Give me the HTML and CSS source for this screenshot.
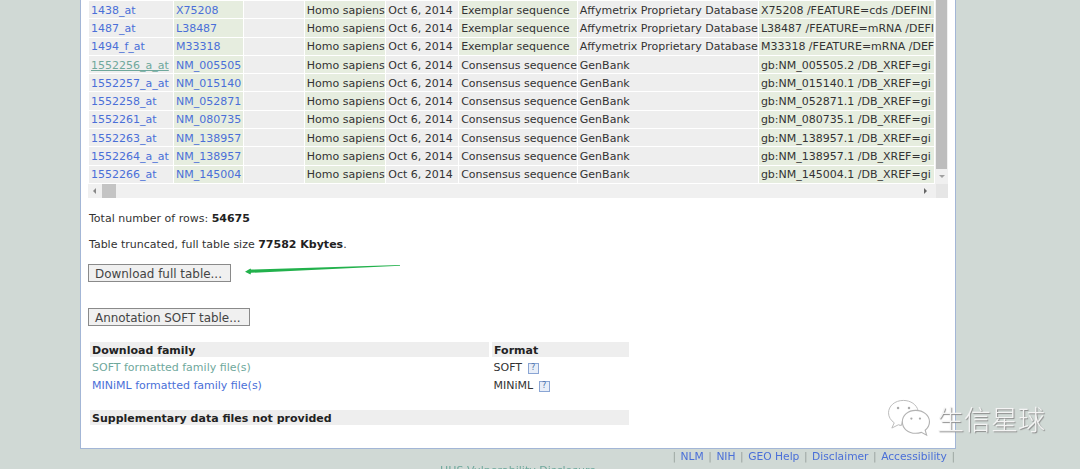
FILE: index.html
```html
<!DOCTYPE html>
<html lang="en">
<head>
<meta charset="utf-8">
<title>GEO Platform</title>
<link rel="stylesheet" href="styles.css">
</head>
<body>
<div class="page">
  <main class="panel">
    <div class="scrollbox">
      <div class="scroll-main">
        <table class="data">
          <colgroup><col class="c1"><col class="c2"><col class="c3"><col class="c4"><col class="c5"><col class="c6"><col class="c7"><col class="c8"></colgroup>
          <tbody>
            <tr><td><a href="#">1438_at</a></td><td class="g"><a href="#">X75208</a></td><td></td><td class="g">Homo sapiens</td><td>Oct 6, 2014</td><td class="g">Exemplar sequence</td><td>Affymetrix Proprietary Database</td><td class="g">X75208 /FEATURE=cds /DEFINI</td></tr>
            <tr><td><a href="#">1487_at</a></td><td class="g"><a href="#">L38487</a></td><td></td><td class="g">Homo sapiens</td><td>Oct 6, 2014</td><td class="g">Exemplar sequence</td><td>Affymetrix Proprietary Database</td><td class="g">L38487 /FEATURE=mRNA /DEFI</td></tr>
            <tr><td><a href="#">1494_f_at</a></td><td class="g"><a href="#">M33318</a></td><td></td><td class="g">Homo sapiens</td><td>Oct 6, 2014</td><td class="g">Exemplar sequence</td><td>Affymetrix Proprietary Database</td><td class="g">M33318 /FEATURE=mRNA /DEF</td></tr>
            <tr><td><a href="#" class="visited under">1552256_a_at</a></td><td class="g"><a href="#">NM_005505</a></td><td></td><td class="g">Homo sapiens</td><td>Oct 6, 2014</td><td>Consensus sequence</td><td>GenBank</td><td class="g">gb:NM_005505.2 /DB_XREF=gi</td></tr>
            <tr><td><a href="#">1552257_a_at</a></td><td class="g"><a href="#">NM_015140</a></td><td></td><td class="g">Homo sapiens</td><td>Oct 6, 2014</td><td>Consensus sequence</td><td>GenBank</td><td class="g">gb:NM_015140.1 /DB_XREF=gi</td></tr>
            <tr><td><a href="#">1552258_at</a></td><td class="g"><a href="#">NM_052871</a></td><td></td><td class="g">Homo sapiens</td><td>Oct 6, 2014</td><td>Consensus sequence</td><td>GenBank</td><td class="g">gb:NM_052871.1 /DB_XREF=gi</td></tr>
            <tr><td><a href="#">1552261_at</a></td><td class="g"><a href="#">NM_080735</a></td><td></td><td class="g">Homo sapiens</td><td>Oct 6, 2014</td><td>Consensus sequence</td><td>GenBank</td><td class="g">gb:NM_080735.1 /DB_XREF=gi</td></tr>
            <tr><td><a href="#">1552263_at</a></td><td class="g"><a href="#">NM_138957</a></td><td></td><td class="g">Homo sapiens</td><td>Oct 6, 2014</td><td>Consensus sequence</td><td>GenBank</td><td class="g">gb:NM_138957.1 /DB_XREF=gi</td></tr>
            <tr><td><a href="#">1552264_a_at</a></td><td class="g"><a href="#">NM_138957</a></td><td></td><td class="g">Homo sapiens</td><td>Oct 6, 2014</td><td>Consensus sequence</td><td>GenBank</td><td class="g">gb:NM_138957.1 /DB_XREF=gi</td></tr>
            <tr><td><a href="#">1552266_at</a></td><td class="g"><a href="#">NM_145004</a></td><td></td><td class="g">Homo sapiens</td><td>Oct 6, 2014</td><td>Consensus sequence</td><td>GenBank</td><td class="g">gb:NM_145004.1 /DB_XREF=gi</td></tr>
          </tbody>
        </table>
        <div class="vbar"><div class="vthumb"></div><div class="varrow"></div></div>
      </div>
      <div class="hbar"><span class="arrow-l"></span><span class="hthumb"></span><span class="arrow-r"></span><span class="corner"></span></div>
    </div>

    <p class="note first">Total number of rows: <b>54675</b></p>
    <p class="note second">Table truncated, full table size <b>77582 Kbytes</b>.</p>
    <button class="btn btn-download" type="button">Download full table...</button>
    <button class="btn btn-soft" type="button">Annotation SOFT table...</button>

    <table class="family">
      <colgroup><col class="f1"><col class="f2"></colgroup>
      <tbody>
        <tr class="head"><th>Download family</th><th>Format</th></tr>
        <tr><td><a href="#" class="visited">SOFT formatted family file(s)</a></td><td class="fmt">SOFT <span class="help">?</span></td></tr>
        <tr><td><a href="#">MINiML formatted family file(s)</a></td><td class="fmt">MINiML <span class="help">?</span></td></tr>
        <tr class="spacer"><td colspan="2"></td></tr>
        <tr class="head"><th colspan="2">Supplementary data files not provided</th></tr>
      </tbody>
    </table>
  </main>

  <nav class="footer-links">
    <span class="sep">|</span><a href="#">NLM</a><span class="sep">|</span><a href="#">NIH</a><span class="sep">|</span><a href="#">GEO Help</a><span class="sep">|</span><a href="#">Disclaimer</a><span class="sep">|</span><a href="#">Accessibility</a><span class="sep">|</span>
  </nav>
  <div class="hhs"><a href="#">HHS Vulnerability Disclosure</a></div>

  <svg class="arrow" width="160" height="12" viewBox="0 0 160 12" aria-hidden="true">
    <path d="M0 7.700 L5.500 4.400 L6 5.600 L155 1 L155 1.800 L6 8.800 L5.500 10.400 Z" fill="#22b14c"/>
  </svg>

  <div class="watermark">
    <svg class="wx" width="44" height="40" viewBox="0 0 46 42" aria-hidden="true">
      <path d="M17 1.500C8 1.500 1.500 7.500 1.500 14.500C1.500 19 4 22.500 7.500 25L5 30.500L12 27C13 27.400 14 27.600 15 27.700" fill="#fff" stroke="#b9b9b9" stroke-width="1"/>
      <path d="M17 1.500C25 1.500 31 6 32.500 12C27 11.500 17 15 15 27.700C14 27.600 13 27.400 12 27" fill="#fff" stroke="#b9b9b9" stroke-width="1"/>
      <path d="M30 12C38 12 44.500 17 44.500 24C44.500 27.500 42.800 30.500 40 32.800L41.500 38L36 35C34.500 35.500 32 36 30 36C22 36 16 31 16 24C16 17 22 12 30 12Z" fill="#fff" stroke="#b3b3b3" stroke-width="1.200"/>
      <circle cx="11.500" cy="9.500" r="1.300" fill="#aaa"/><circle cx="23" cy="9.500" r="1.300" fill="#aaa"/>
      <circle cx="25.500" cy="20.500" r="1.200" fill="#aaa"/><circle cx="34.500" cy="20.500" r="1.200" fill="#aaa"/>
    </svg>
    <span class="wm-text">生信星球</span>
  </div>
</div>
</body>
</html>
```

FILE: styles.css
```css
html, body {
  margin: 0;
  height: 469px;
  overflow: hidden;
}
body {
  background: #d0d9d5;
  font-family: "DejaVu Sans", Verdana, sans-serif;
  font-size: 11px;
  color: #333;
}
a { color: #4a6fd8; text-decoration: none; }
a.visited { color: #6fa89c; }
a.under { text-decoration: underline; }

.page {
  position: relative;
  height: 469px;
  overflow: hidden;
  filter: blur(0.35px);
}

.panel {
  box-sizing: border-box;
  width: 876px;
  height: 449px;
  margin-left: 80px;
  padding: 0 7px 0 7px;
  background: #fff;
  border: solid #a3b6d6;
  border-width: 0 1.500px 1.500px 1.500px;
  overflow: hidden;
}

.scrollbox { width: 860px; background: #f0f0f0; }
.scroll-main { display: flex; height: 184px; overflow: hidden; background: #f0f0f0; }

table.data {
  table-layout: fixed;
  width: 847px;
  height: 184px;
  border-collapse: separate;
  border-spacing: 1.500px;
  background: #fff;
}
.c1 { width: 83.500px; } .c2 { width: 69px; } .c3 { width: 59px; } .c4 { width: 80px; }
.c5 { width: 71.500px; } .c6 { width: 117px; } .c7 { width: 179px; } .c8 { width: 174px; }
table.data td {
  box-sizing: border-box;
  background: #eee;
  padding: 1px 2px 0;
  height: 16.700px;
  line-height: 15px;
  white-space: nowrap;
  overflow: hidden;
}
table.data td.g { background: #e6eddf; }

.vbar { position: relative; width: 13px; background: #f0f0f0; }
.vthumb { width: 11px; height: 169px; margin-left: 1px; background: #bdbdbd; }
.varrow {
  position: absolute; left: 4px; top: 175px;
  border: 3px solid transparent; border-top: 3px solid #a0a0a0; border-bottom: 0;
}

.hbar { position: relative; height: 14px; background: #f0f0f0; display: flex; align-items: center; }
.arrow-l { margin-left: 5px; border: 3px solid transparent; border-right: 3px solid #888; border-left: 0; }
.hthumb { margin-left: 6px; width: 14px; height: 14px; background: #c4c4c4; }
.arrow-r { margin-left: auto; margin-right: 9px; border: 3px solid transparent; border-left: 3px solid #666; border-right: 0; }
.corner { width: 12px; height: 14px; background: #e6e6e6; }

.note { margin: 0; padding-left: 1px; line-height: 14px; }
.note b { color: #222; }
.first { margin-top: 14px; }
.second { margin-top: 12px; }

.btn {
  display: block;
  box-sizing: border-box;
  height: 18px;
  padding: 1px 8px 0 6px;
  border: 1.500px solid #8a8a8a;
  background: #f0f0f0;
  color: #444;
  font: 11.950px "DejaVu Sans", Verdana, sans-serif;
  line-height: 14px;
}
.btn-download { margin-top: 12px; }
.btn-soft { margin-top: 26px; }

table.family {
  table-layout: fixed;
  width: 539px;
  margin: 16px 0 0 2px;
  border-collapse: collapse;
}
.f1 { width: 400.500px; } .f2 { width: 138.500px; }
table.family th {
  box-sizing: border-box;
  background: #eee;
  color: #222;
  text-align: left;
  padding: 2px 2px 0;
  height: 15px;
  line-height: 13px;
}
table.family tr.head th + th { border-left: 3px solid #fff; }
table.family td { padding: 3px 2px 0; height: 18px; line-height: 15px; box-sizing: border-box; }
table.family td.fmt { padding-left: 3px; }
table.family tr.spacer td { height: 17px; padding: 0; line-height: 0; }
.help {
  display: inline-block;
  box-sizing: border-box;
  width: 11px; height: 11px;
  margin-left: 2px;
  border: 1.500px solid #8aa5d4;
  background: #e8eef8;
  color: #4a6fa8;
  font-size: 8px;
  line-height: 8px;
  text-align: center;
  vertical-align: 1px;
}

.footer-links {
  box-sizing: border-box;
  width: 955px;
  height: 15px;
  display: flex;
  justify-content: flex-end;
  gap: 4.500px;
  font-size: 10.700px;
  line-height: 15px;
}
.sep { color: #9aa39f; }
.hhs { width: 1036px; text-align: center; line-height: 13px; }
.hhs a { color: #6fa89c; }

.arrow { position: absolute; left: 245px; top: 264px; }

.watermark {
  position: absolute;
  left: 887px;
  top: 399px;
  display: flex;
  align-items: center;
  gap: 6px;
}
.wm-text {
  font-family: "Noto Sans CJK SC", sans-serif;
  font-size: 27px;
  font-weight: 300;
  line-height: 40px;
  color: #f4f4f4;
  text-shadow: 1px 1px 1px #8a8a8a;
}
```
